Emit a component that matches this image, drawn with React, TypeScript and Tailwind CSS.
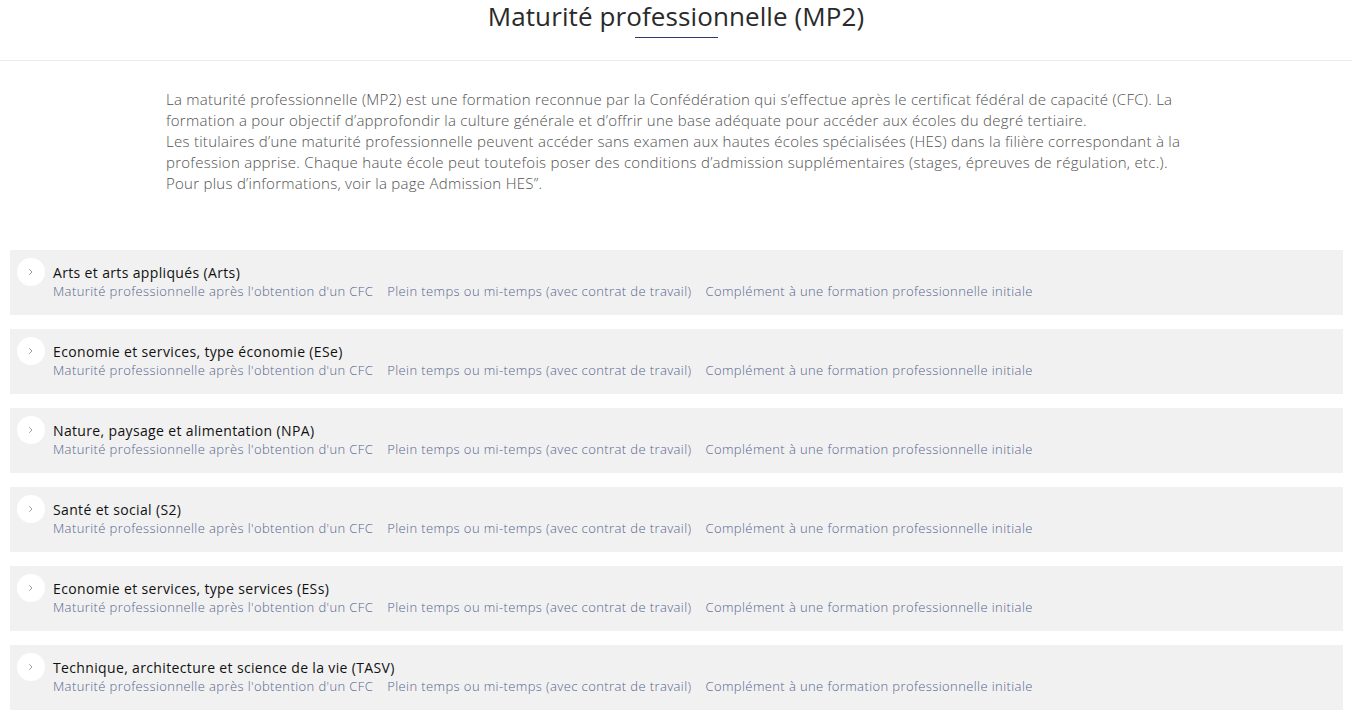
import React from "react";

const items = [
  "Arts et arts appliqués (Arts)",
  "Economie et services, type économie (ESe)",
  "Nature, paysage et alimentation (NPA)",
  "Santé et social (S2)",
  "Economie et services, type services (ESs)",
  "Technique, architecture et science de la vie (TASV)",
];

const tags = [
  "Maturité professionnelle après l'obtention d'un CFC",
  "Plein temps ou mi-temps (avec contrat de travail)",
  "Complément à une formation professionnelle initiale",
];

export default function App() {
  return (
    <div
      className="bg-white min-h-[727px] w-[1352px]"
      style={{ fontFamily: '"Open Sans", "Noto Sans", sans-serif' }}
    >
      <header className="h-[61px] border-b border-[#ebebeb] flex flex-col items-center">
        <h1 className="text-[26px] leading-[32px] pt-0 text-[#2a2a2a] font-normal tracking-[0.1px]">
          Maturité professionnelle (MP2)
        </h1>
        <div className="mt-[5px] w-[83px] h-px bg-[#2f3a6f]" />
      </header>

      <div className="w-[1020px] mx-auto mt-[28px] text-[15px] leading-[21px] tracking-[0.27px] text-[#515151] font-light">
        <p className="whitespace-nowrap">
          La maturité professionnelle (MP2) est une formation reconnue par la Confédération qui s’effectue après le certificat fédéral de capacité (CFC). La
        </p>
        <p className="whitespace-nowrap">
          formation a pour objectif d’approfondir la culture générale et d’offrir une base adéquate pour accéder aux écoles du degré tertiaire.
        </p>
        <p className="whitespace-nowrap">
          Les titulaires d’une maturité professionnelle peuvent accéder sans examen aux hautes écoles spécialisées (HES) dans la filière correspondant à la
        </p>
        <p className="whitespace-nowrap">
          profession apprise. Chaque haute école peut toutefois poser des conditions d’admission supplémentaires (stages, épreuves de régulation, etc.).
        </p>
        <p className="whitespace-nowrap">Pour plus d’informations, voir la page Admission HES”.</p>
      </div>

      <div className="ml-[10px] mr-[9px] mt-[56px] flex flex-col gap-[14px]">
        {items.map((t) => (
          <div key={t} className="bg-[#f1f1f1] h-[65px] flex items-start pl-[7px] pt-[8px]">
            <div className="w-[28px] h-[28px] rounded-full bg-white flex items-center justify-center shrink-0">
              <svg width="8" height="10" viewBox="0 0 8 10" fill="none">
                <path d="M2.5 2.5 L5 5 L2.5 7.5" stroke="#a0a0a0" strokeWidth="1" strokeLinecap="round" strokeLinejoin="round" />
              </svg>
            </div>
            <div className="ml-[8px] pt-[6px]">
              <div className="text-[14px] leading-[18px] tracking-[0.35px] text-[#111] font-normal">{t}</div>
              <div className="flex gap-[14px] text-[13px] leading-[19px] tracking-[0.4px] text-[#56658f] font-light">
                {tags.map((g) => (
                  <span key={g}>{g}</span>
                ))}
              </div>
            </div>
          </div>
        ))}
      </div>
    </div>
  );
}
